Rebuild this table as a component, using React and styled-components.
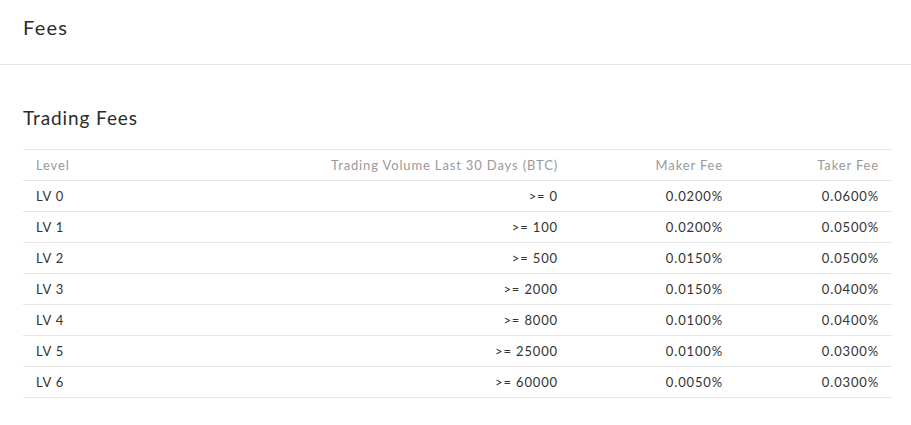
import React from "react";
import styled, { createGlobalStyle } from "styled-components";

const GlobalStyle = createGlobalStyle`
  body {
    margin: 0;
    background: #fff;
    font-family: Lato, "Open Sans", sans-serif;
    color: #333;
  }
`;

const PageHeader = styled.div`
  height: 65px;
  display: flex;
  align-items: center;
  padding: 0 23px 10px;
  box-sizing: border-box;
  border-bottom: 1px solid #e5e5e5;
`;

const PageTitle = styled.h1`
  margin: 0;
  font-size: 20px;
  font-weight: 400;
  letter-spacing: 1.2px;
  color: #2b2b2b;
`;

const Section = styled.section`
  padding: 40px 19px 0 23px;
`;

const SectionTitle = styled.h2`
  margin: 0 0 18px;
  font-size: 19px;
  font-weight: 400;
  letter-spacing: 0.9px;
  color: #2b2b2b;
  line-height: 26px;
`;

const Table = styled.table`
  width: 100%;
  border-collapse: collapse;
  table-layout: fixed;
  font-size: 13px;
  letter-spacing: 0.85px;
`;

const HeadCell = styled.th`
  box-sizing: border-box;
  height: 31px;
  padding: 0 13px;
  font-weight: 400;
  color: #9a9a9a;
  white-space: nowrap;
  text-align: ${p => (p.$right ? "right" : "left")};
  border-top: 1px solid #e6e6e6;
  border-bottom: 1px solid #e6e6e6;
  width: ${p => p.$width || "auto"};
`;

const Cell = styled.td`
  box-sizing: border-box;
  height: 31px;
  padding: 0 13px;
  color: #333;
  white-space: nowrap;
  text-align: ${p => (p.$right ? "right" : "left")};
  border-bottom: 1px solid #e6e6e6;
`;

const rows = [
  ["LV 0", ">= 0", "0.0200%", "0.0600%"],
  ["LV 1", ">= 100", "0.0200%", "0.0500%"],
  ["LV 2", ">= 500", "0.0150%", "0.0500%"],
  ["LV 3", ">= 2000", "0.0150%", "0.0400%"],
  ["LV 4", ">= 8000", "0.0100%", "0.0400%"],
  ["LV 5", ">= 25000", "0.0100%", "0.0300%"],
  ["LV 6", ">= 60000", "0.0050%", "0.0300%"]
];

export default function App() {
  return (
    <>
      <GlobalStyle />
      <PageHeader>
        <PageTitle>Fees</PageTitle>
      </PageHeader>
      <Section>
        <SectionTitle>Trading Fees</SectionTitle>
        <Table>
          <thead>
            <tr>
              <HeadCell $width="177px">Level</HeadCell>
              <HeadCell $right $width="371px">Trading Volume Last 30 Days (BTC)</HeadCell>
              <HeadCell $right $width="165px">Maker Fee</HeadCell>
              <HeadCell $right>Taker Fee</HeadCell>
            </tr>
          </thead>
          <tbody>
            {rows.map(r => (
              <tr key={r[0]}>
                <Cell>{r[0]}</Cell>
                <Cell $right>{r[1]}</Cell>
                <Cell $right>{r[2]}</Cell>
                <Cell $right>{r[3]}</Cell>
              </tr>
            ))}
          </tbody>
        </Table>
      </Section>
    </>
  );
}
